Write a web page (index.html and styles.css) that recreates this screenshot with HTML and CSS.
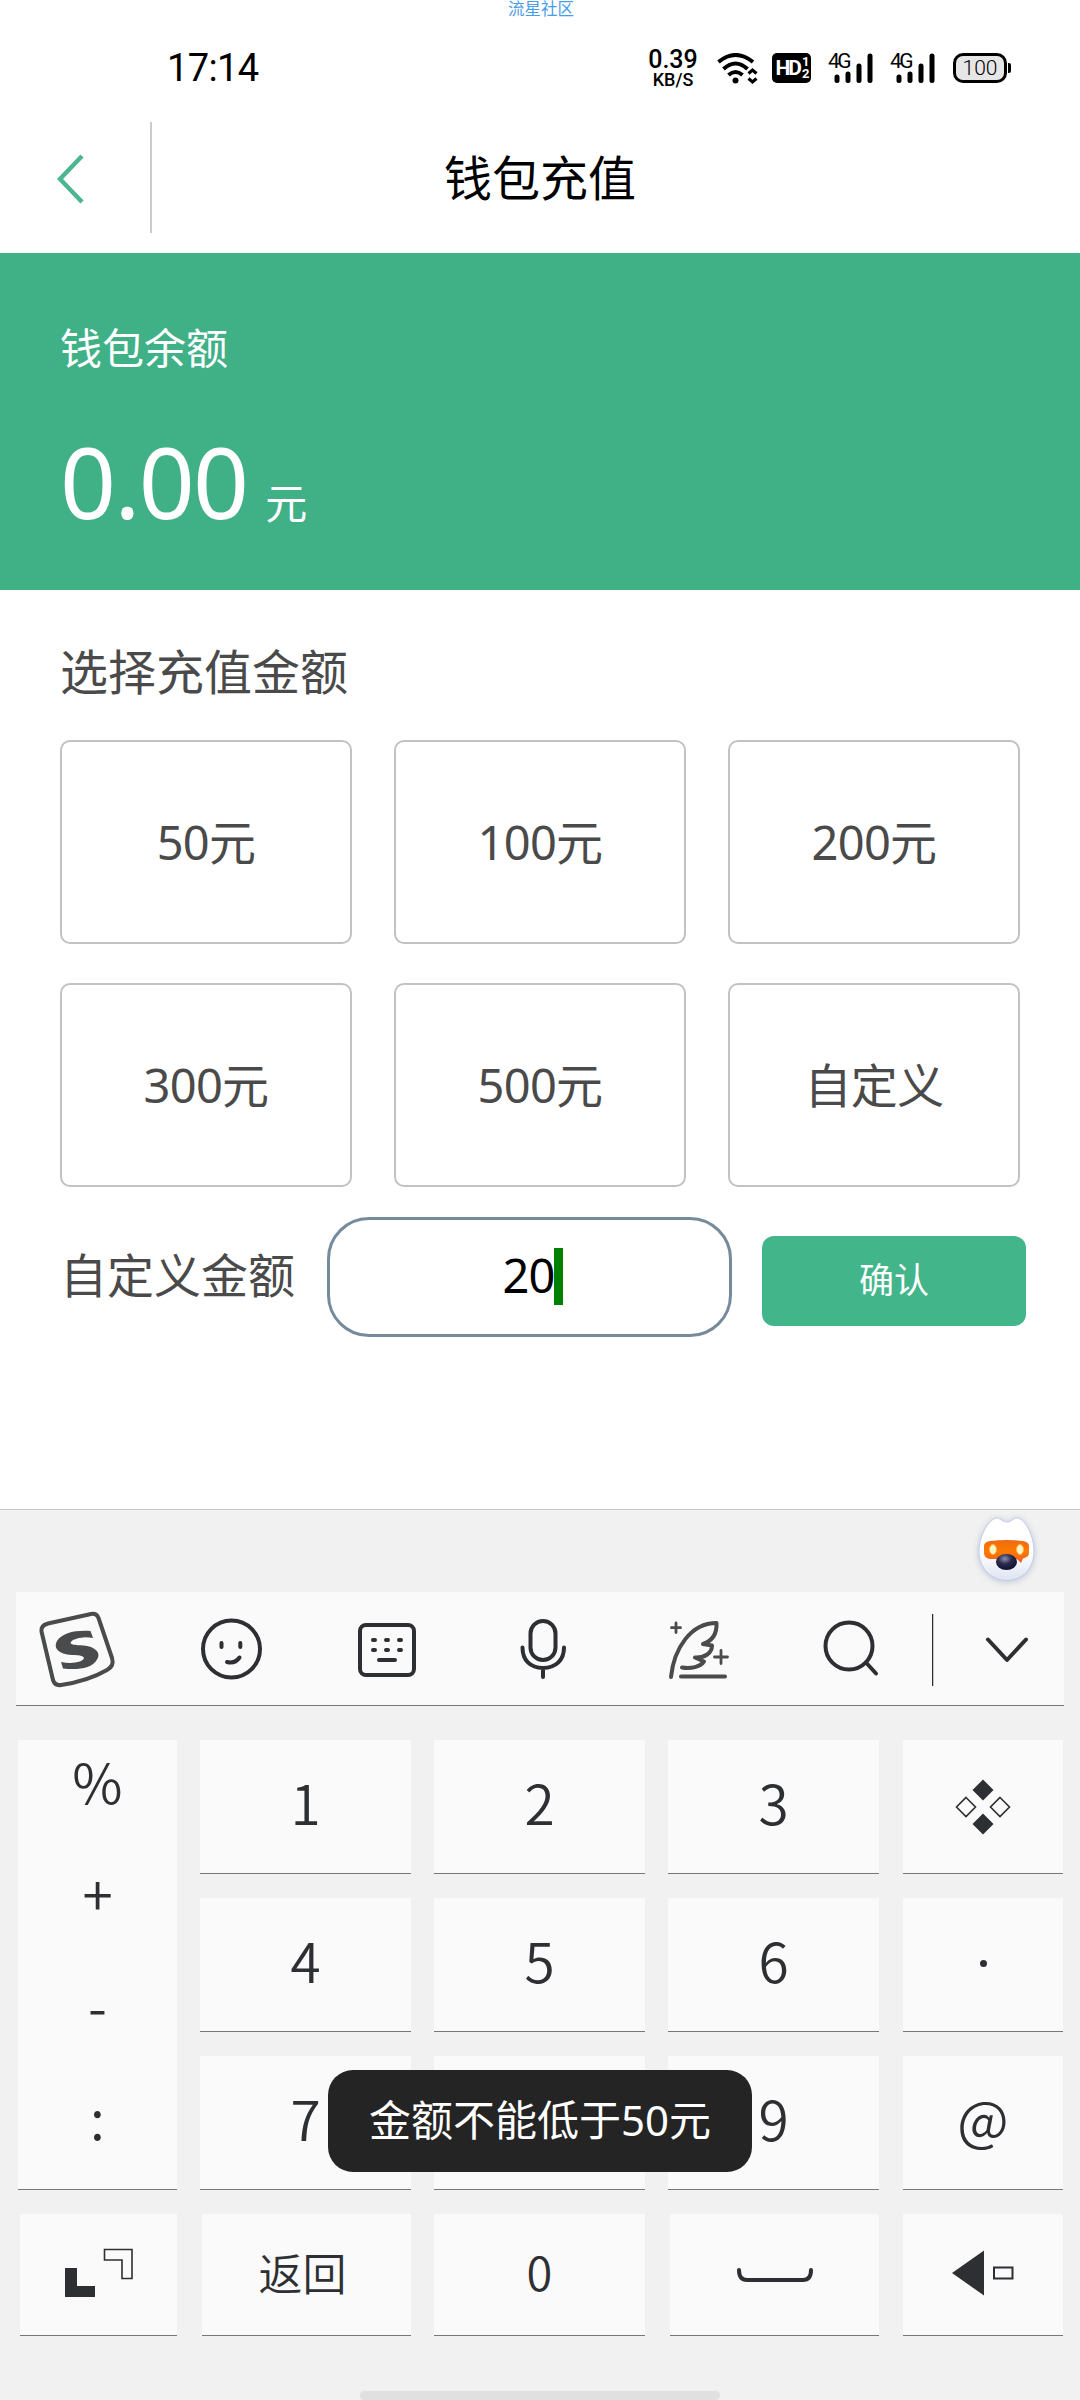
FILE: index.html
```html
<!DOCTYPE html>
<html lang="zh-CN">
<head>
<meta charset="utf-8">
<title>钱包充值</title>
<link rel="stylesheet" href="styles.css">
</head>
<body>
<div class="screen">
  <div class="watermark">流星社区</div>
  <div class="status">
    <span class="time">17:14</span>
    <div class="status-icons">
      <div class="speed"><span class="rate">0.39</span><span class="unit">KB/S</span></div>
      <svg class="wifi" viewBox="0 0 42 32" fill="none" stroke="#000" stroke-width="4">
        <path d="M1.500 9Q18.500-5 36 9M6.500 16Q18.500 5 30.500 16M11.500 22Q18.500 16 25.500 22"/>
        <circle cx="18.500" cy="27.500" r="3" fill="#000" stroke="none"/>
        <path d="M31.500 20.500L35.500 17L39.500 20.500M31.500 25.500L35.500 29L39.500 25.500" stroke-width="3"/>
      </svg>
      <div class="hd"><span>HD</span><span class="hd-num"><i>1</i><i>2</i></span></div>
      <div class="signal"><span>4G</span>
        <svg viewBox="0 0 40 32" stroke="#000" stroke-width="5" stroke-linecap="round"><path d="M3 24V27.500M14 21V27.500M25 13V27.500M36 3V27.500"/></svg>
      </div>
      <div class="signal second"><span>4G</span>
        <svg viewBox="0 0 40 32" stroke="#000" stroke-width="5" stroke-linecap="round"><path d="M3 24V27.500M14 21V27.500M25 13V27.500M36 3V27.500"/></svg>
      </div>
      <div class="battery">100</div><div class="nub"></div>
    </div>
  </div>
  <header class="header">
    <div class="back">
      <svg viewBox="0 0 28 50" fill="none" stroke="#4db58f" stroke-width="4.500"><path d="M25 2L3 25L25 48"/></svg>
    </div>
    <h1>钱包充值</h1>
  </header>
  <section class="balance">
    <div class="label">钱包余额</div>
    <div class="amount"><span class="value">0.00</span><span class="yuan">元</span></div>
  </section>
  <main class="recharge">
    <h2>选择充值金额</h2>
    <div class="options">
      <div class="option">50元</div><div class="option">100元</div><div class="option">200元</div>
      <div class="option">300元</div><div class="option">500元</div><div class="option">自定义</div>
    </div>
    <div class="custom">
      <span class="custom-label">自定义金额</span>
      <div class="field"><span>20</span><i class="caret"></i></div>
      <div class="confirm">确认</div>
    </div>
  </main>
  <section class="keyboard">
    <div class="mascot-row">
      <svg class="mascot" viewBox="972 1511 70 78">
        <defs>
          <linearGradient id="fur" x1="0" y1="0" x2="0" y2="1"><stop offset=".55" stop-color="#fff"/><stop offset="1" stop-color="#dce3f2"/></linearGradient>
          <linearGradient id="visor" x1="0" y1="0" x2="0" y2="1"><stop offset="0" stop-color="#ee6a12"/><stop offset=".5" stop-color="#ff7a00"/><stop offset="1" stop-color="#f05a28"/></linearGradient>
          <radialGradient id="nose" cx=".42" cy=".3" r=".65"><stop offset="0" stop-color="#8d90ab"/><stop offset=".5" stop-color="#2a2b50"/><stop offset="1" stop-color="#14152f"/></radialGradient>
        </defs>
        <path d="M996 1518C999 1517 1002 1522 1007 1522S1014 1517 1018 1518C1027 1521 1034 1538 1034 1551C1034 1569 1022 1580.500 1007 1580.500S979 1569 979 1551C979 1538 987 1521 996 1518Z" fill="url(#fur)" stroke="#c3cce0" stroke-width="1"/>
        <path d="M990 1541Q1006.500 1539 1023 1541Q1029 1542 1029 1546V1553Q1029 1557 1023 1558.500L1021 1563L1017 1559H990Q984 1558 984 1553V1546Q984 1542 990 1541Z" fill="url(#visor)"/>
        <ellipse cx="993" cy="1549.500" rx="3.500" ry="5" fill="#fff6c4" stroke="#ffb04a"/>
        <ellipse cx="1020" cy="1549.500" rx="3.500" ry="5" fill="#fff6c4" stroke="#ffb04a"/>
        <ellipse cx="1006.500" cy="1562" rx="10.500" ry="8" fill="url(#nose)"/>
      </svg>
    </div>
    <div class="toolbar">
      <svg width="138" viewBox="16 1592 138 113" class="soft"><path d="M48 1623.500L91 1614Q96.500 1613 98.500 1618L112 1658Q114.500 1666 107 1670Q88 1681 61 1685Q55 1686 53 1680L41.500 1631.500Q40.500 1625.500 48 1623.500Z"/><path class="solid" d="M90.500 1631L93 1638Q81 1636 73 1640C66 1645 76 1645 84 1645.500C97 1647 101 1654 97 1659.500C92 1669 77 1670 63 1668.500L61 1662Q72 1664 80 1661.500C89 1657 81 1655 72 1655C58 1654 53 1648 57 1641C62 1633 75 1630 90.500 1631Z"/></svg>
      <svg width="155" viewBox="154 1592 155 113"><circle cx="231.500" cy="1649" r="28.500"/><path d="M221.500 1643V1647M240.300 1643V1647M227 1662Q235 1664 239.500 1657.500"/></svg>
      <svg width="156" viewBox="309 1592 156 113"><rect x="360" y="1625" width="54" height="50" rx="6"/><path d="M373 1640H375M386 1640H388M399 1640H401M373 1650H375M386 1650H388M399 1650H401M379 1660H395"/></svg>
      <svg width="156" viewBox="465 1592 156 113"><rect x="530.500" y="1621" width="25" height="39" rx="12.500"/><path d="M522.500 1647.500C522.500 1660 530 1668 543 1668S564 1660 564 1647.500M543 1668V1677"/></svg>
      <svg width="154" viewBox="621 1592 154 113" class="soft"><path d="M671 1677C674 1648 691 1623 716.500 1623C717 1634 712 1641 703 1644L712 1645.500C712 1653 705 1658 695 1657.500L704 1661.500C700 1667 691 1669 682 1667.500M681 1676.500H725"/><path d="M676 1623V1632.500M671.500 1627.700H680.500M721 1650.500V1663.500M714.500 1657H727.500" stroke-width="2.800"/></svg>
      <svg width="157" viewBox="775 1592 157 113"><circle cx="849" cy="1646" r="23.500"/><path d="M866 1662.500L876 1673.500"/></svg>
      <svg width="132" viewBox="932 1592 132 113"><path class="hair" d="M932.500 1614V1686"/><path d="M988 1639.500L1007 1660L1026 1639.500"/></svg>
    </div>
    <div class="keys">
      <div class="key symbols"><span>%</span><span>+</span><span>-</span><span>:</span></div>
      <div class="key">1</div><div class="key">2</div><div class="key">3</div>
      <div class="key icon side"><svg viewBox="0 0 60 60" fill="none" stroke="#2e2f32" stroke-width="1.600"><path d="M30 2.500L40.500 13L30 23.500L19.500 13ZM30 36.500L40.500 47L30 57.500L19.500 47Z" fill="#2e2f32" stroke="none"/><path d="M13 20.500L22.500 30L13 39.500L3.500 30ZM47 20.500L56.500 30L47 39.500L37.500 30Z"/></svg></div>
      <div class="key">4</div><div class="key">5</div><div class="key">6</div><div class="key side icon"><i class="dot"></i></div>
      <div class="key">7</div><div class="key">8</div><div class="key">9</div><div class="key side">@</div>
    </div>
    <div class="keys bottom">
      <div class="key inset"><svg width="70" height="50" viewBox="0 0 70 50"><path d="M1 20H13V38H31V49H1Z" fill="#2e2f32"/><path d="M40.500 1.500H68V30.500H58V12H40.500Z" fill="none" stroke="#2e2f32" stroke-width="1.600"/></svg></div>
      <div class="key word inset">返回</div>
      <div class="key zero">0</div>
      <div class="key inset icon"><svg width="78" height="18" viewBox="0 0 78 18" fill="none" stroke="#2e2f32" stroke-width="4" stroke-linecap="round"><path d="M3 3Q3 13 11 13H67Q75 13 75 3"/></svg></div>
      <div class="key side"><svg width="64" height="46" viewBox="0 0 64 46"><path d="M1 23L33 .5V45.500Z" fill="#2e2f32"/><path d="M43 17.500H61.500V28.500H43Z" fill="none" stroke="#2e2f32" stroke-width="2"/></svg></div>
    </div>
    <div class="home"></div>
  </section>
  <div class="toast">金额不能低于50元</div>
</div>
</body>
</html>
```
FILE: styles.css
```css
* { box-sizing: border-box; }
body { margin: 0; background: #fff; }
i { font-style: normal; }
svg { display: block; flex: none; }

.screen {
  position: relative;
  width: 1080px;
  height: 2400px;
  overflow: hidden;
  display: flex;
  flex-direction: column;
  font-family: "Noto Sans", "Noto Sans CJK SC", sans-serif;
  color: #4a4a4a;
}

.watermark {
  height: 16px;
  line-height: 17px;
  padding-left: 2px;
  font-size: 16.5px;
  text-align: center;
  color: #4a9de8;
}

/* status bar */
.status {
  height: 106px;
  display: flex;
  justify-content: space-between;
  padding: 37px 69px 0 167px;
  font-family: Roboto, sans-serif;
  color: #000;
}
.time { font-size: 38px; line-height: 31px; letter-spacing: -0.6px; }
.status-icons { display: flex; height: 30px; align-items: flex-start; }
.speed { width: 52px; display: flex; flex-direction: column; align-items: center; font-weight: 500; margin: -5px 18px 0 0; }
.rate { font-size: 25px; line-height: 24px; }
.unit { font-size: 18px; line-height: 18px; margin-top: -1px; }
.wifi { width: 42px; height: 32px; margin-right: 13px; }
.hd {
  width: 39px;
  height: 30px;
  border-radius: 5px;
  background: #000;
  color: #fff;
  display: flex;
  align-items: center;
  justify-content: center;
  font-size: 21px;
  font-weight: 700;
  letter-spacing: -2px;
}
.hd-num { display: flex; flex-direction: column; font-size: 13px; line-height: 12px; margin-left: 2px; }
.signal { position: relative; width: 45px; height: 30px; margin-left: 18px; padding-left: 5px; }
.signal.second { margin-left: 17px; }
.signal span { position: absolute; left: -1px; top: -1px; font-size: 21px; line-height: 19px; letter-spacing: -2.5px; font-weight: 400; }
.signal svg { width: 40px; height: 32px; overflow: visible; }
.battery {
  width: 54px;
  height: 30px;
  margin-left: 17px;
  border: 3px solid #000;
  border-radius: 10px;
  background: #e6e6e6;
  font-size: 21px;
  line-height: 24px;
  text-align: center;
  font-weight: 300;
}
.nub { width: 3px; height: 10px; margin: 10px 0 0 1px; border-radius: 0 2px 2px 0; background: #000; }

/* page header */
.header {
  height: 131px;
  display: grid;
  grid-template-columns: 152px 1fr 152px;
  align-items: start;
  color: #000;
}
.back { height: 111px; border-right: 2px solid #ccc; padding: 32px 0 0 57px; }
.back svg { width: 28px; height: 50px; }
.header h1 { margin: 22px 0 0; font-size: 48px; line-height: 68px; font-weight: 400; text-align: center; }

.balance { height: 337px; padding: 66px 60px 0; background: #40b087; color: #fff; }
.label { font-size: 42px; line-height: 58px; }
.amount { display: flex; align-items: baseline; margin-top: 37px; }
.value { font-size: 98px; line-height: 134px; letter-spacing: -1.8px; }
.yuan { font-size: 42px; margin-left: 18px; }

.recharge { height: 919px; padding: 52px 53px 0 60px; }
.recharge h2 { margin: 0; font-size: 48px; line-height: 60px; font-weight: 400; }
.options {
  display: grid;
  grid-template-columns: repeat(3, 292px);
  grid-auto-rows: 204px;
  gap: 39px 42px;
  margin-top: 38px;
}
.option {
  display: flex;
  align-items: center;
  justify-content: center;
  border: 2px solid #c2c2c2;
  border-radius: 10px;
  padding-bottom: 6px;
  font-size: 47px;
  letter-spacing: -0.7px;
}
.custom { display: flex; align-items: center; margin-top: 30px; }
.custom-label { width: 267px; padding-bottom: 4px; font-size: 47px; line-height: 60px; }
.field {
  width: 405px;
  height: 120px;
  border: 3px solid #758b9b;
  border-radius: 42px;
  display: flex;
  align-items: center;
  justify-content: center;
  padding-left: 7px;
  font-size: 47px;
  color: #000;
}
.field span { line-height: 60px; padding-bottom: 4px; letter-spacing: -1px; }
.caret { width: 9px; height: 57px; margin-bottom: 1px; background: #008000; }
.confirm {
  width: 264px;
  height: 90px;
  margin: 8px 0 0 30px;
  border-radius: 12px;
  background: #43b58a;
  color: #fff;
  font-size: 35px;
  line-height: 88px;
  text-align: center;
}

/* soft keyboard */
.keyboard {
  height: 891px;
  border-top: 1px solid #c8c8c8;
  background: #f1f1f1;
  font-family: "Noto Sans CJK SC", sans-serif;
  color: #2e2f32;
}
.mascot-row { height: 82px; padding: 1px 38px 0 0; display: flex; justify-content: flex-end; }
.mascot { width: 70px; height: 78px; filter: drop-shadow(0 1px 3px #b9c3d8); }
.toolbar { width: 1048px; height: 114px; margin: 0 16px; display: flex; background: #fafafa; border-bottom: 1px solid #777; }
.toolbar svg { height: 113px; fill: none; stroke: #2e2f32; stroke-width: 4; stroke-linecap: round; stroke-linejoin: round; }
.toolbar .soft { stroke: #4a4b4c; }
.toolbar .solid { fill: #4a4b4c; stroke: none; }
.toolbar .hair { stroke-width: 1.5; stroke-linecap: butt; }
.keys {
  display: grid;
  grid-template-columns: 159px 211px 211px 211px 160px;
  grid-template-rows: repeat(3, 134px);
  column-gap: 23px;
  row-gap: 24px;
  margin: 34px 18px 0;
}
.keys.bottom { grid-template-rows: 122px; margin-top: 24px; }
.key {
  display: flex;
  align-items: center;
  justify-content: center;
  background: #fafafa;
  border-bottom: 1px solid #777;
  font-size: 55px;
  font-weight: 350;
  line-height: 80px;
  padding-bottom: 11px;
}
.key.side { margin: 0 -1px 0 1px; }
.key.inset { margin-left: 2px; }
.key.icon { padding-bottom: 0; }
.key.icon svg { flex: none; }
.keys:not(.bottom) .icon svg { width: 60px; height: 60px; }
.symbols { grid-row: span 3; display: grid; grid-template-rows: repeat(4, 112px); align-content: start; justify-items: center; align-items: center; padding: 0; }
.symbols span { margin-top: -32px; }
.dot { width: 7px; height: 7px; border-radius: 50%; background: #2e2f32; margin-top: -3px; }
.bottom .key { padding-bottom: 4px; }
.bottom .word { font-size: 44px; padding: 0 8px 6px 0; }
.bottom .zero { font-size: 47px; padding-bottom: 8px; }
.bottom .icon { padding-bottom: 0; padding-top: 2px; }
.home { width: 360px; height: 9px; margin: 55px auto 0; border-radius: 5px; background: #e0e0e0; }

.toast {
  position: absolute;
  left: 328px;
  top: 2070px;
  width: 424px;
  height: 102px;
  border-radius: 25px;
  background: #242424;
  color: #fff;
  font-size: 42px;
  line-height: 99px;
  text-align: center;
  white-space: nowrap;
}
```
